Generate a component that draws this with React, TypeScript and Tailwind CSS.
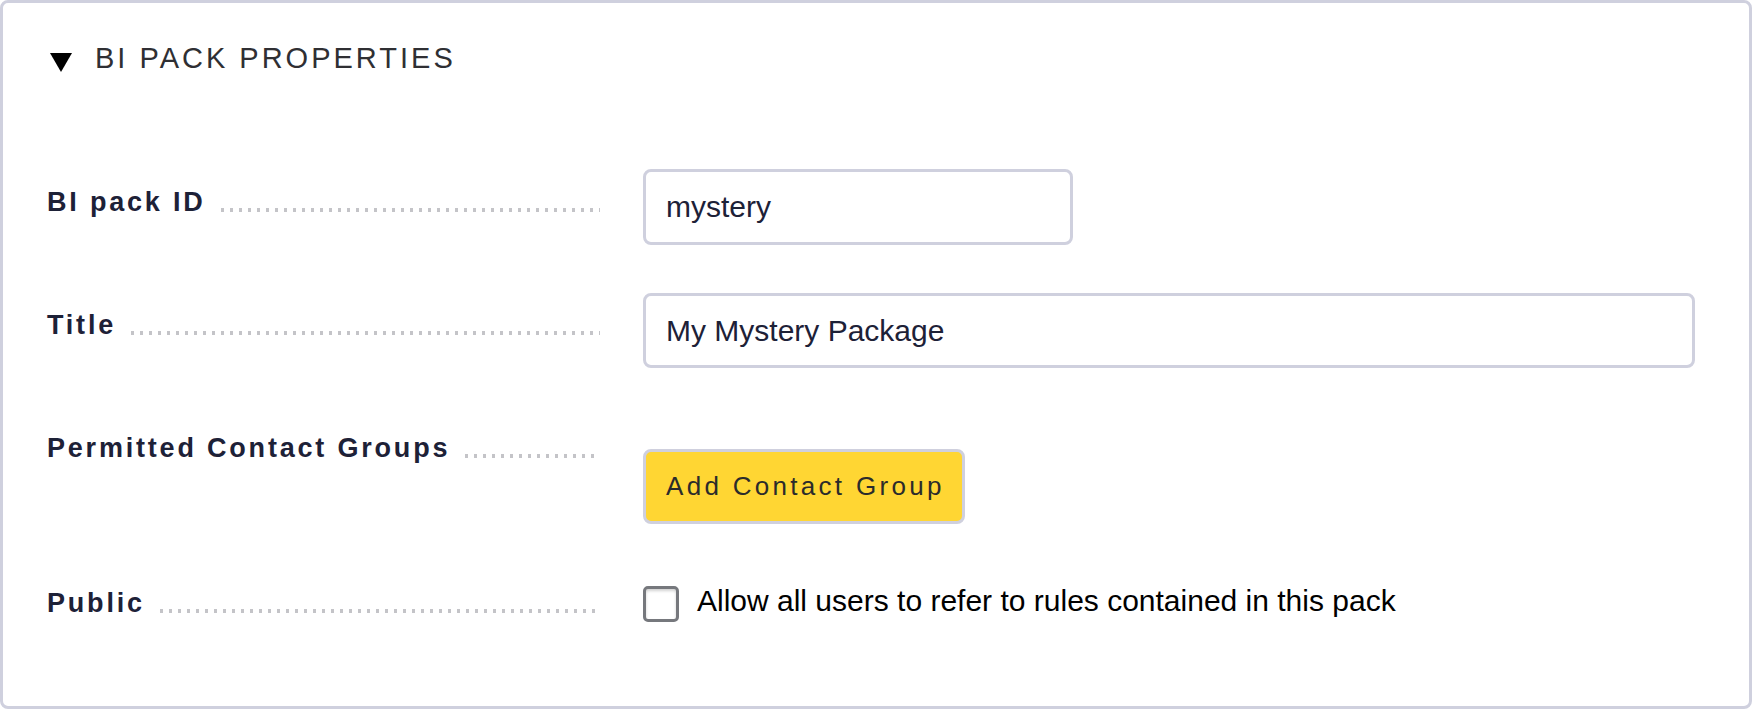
import React from 'react';

const labelFont = { fontFamily: '"Liberation Sans", Arial, sans-serif' };

function Leader() {
  return (
    <div className="flex-1 h-[4px] mb-[4px] bg-[linear-gradient(to_right,#c4c4c8_3px,transparent_3px)] bg-[length:9px_4px] bg-repeat-x" />
  );
}

function FieldLabel({ text, pad }: { text: string; pad: string }) {
  return (
    <div className={`w-[553px] shrink-0 flex items-end ${pad}`}>
      <span className="text-[27px] leading-none font-bold tracking-[2.8px] text-[#1d2137] whitespace-nowrap">{text}</span>
      <div className="flex-1 flex items-end h-full ml-[15px]">
        <Leader />
      </div>
    </div>
  );
}

export default function App() {
  return (
    <div className="bg-white min-h-screen" style={labelFont}>
      <div className="w-[1752px] h-[709px] border-[3px] border-[#cfd0de] rounded-[8px] pt-[41px] pl-[44px] pr-[54px]">
        <div className="flex items-start h-[29px]">
          <svg width="22" height="19" viewBox="0 0 22 19" className="mt-[9px] ml-[3px]">
            <polygon points="0,0 22,0 11,19" fill="#000" />
          </svg>
          <h2 className="ml-[23px] text-[29px] leading-none font-normal tracking-[3px] text-[#2f2f33]">BI PACK PROPERTIES</h2>
        </div>

        <div className="mt-[96px] flex">
          <FieldLabel text="BI pack ID" pad="pt-[20px] h-[47px]" />
          <div className="ml-[43px]">
            <input
              readOnly
              defaultValue="mystery"
              className="w-[430px] h-[76px] border-[3px] border-[#cfd0de] rounded-[8px] px-[20px] text-[30px] text-[#1d2137] outline-none"
            />
          </div>
        </div>

        <div className="mt-[48px] flex">
          <FieldLabel text="Title" pad="pt-[19px] h-[46px]" />
          <div className="ml-[43px] flex-1">
            <input
              readOnly
              defaultValue="My Mystery Package"
              className="w-full h-[75px] border-[3px] border-[#cfd0de] rounded-[8px] px-[20px] text-[30px] text-[#1d2137] outline-none"
            />
          </div>
        </div>

        <div className="mt-[67px] flex items-start">
          <FieldLabel text="Permitted Contact Groups" pad="h-[27px]" />
          <div className="ml-[43px] pt-[14px]">
            <button className="w-[322px] h-[75px] bg-[#ffd633] border-[3px] border-[#cfd0de] rounded-[8px] pl-[20px] text-left text-[26px] tracking-[3.3px] text-[#2b2b2b]">
              Add Contact Group
            </button>
          </div>
        </div>

        <div className="mt-[62px] flex items-start">
          <FieldLabel text="Public" pad="pt-[4px] h-[31px]" />
          <div className="ml-[43px] flex items-start gap-[18px]">
            <span className="w-[36px] h-[36px] border-[3px] border-[#76787d] rounded-[5px] bg-white shadow-[inset_0_2px_3px_rgba(0,0,0,0.18)]" />
            <span className="text-[30px] leading-none text-black">Allow all users to refer to rules contained in this pack</span>
          </div>
        </div>
      </div>
    </div>
  );
}
